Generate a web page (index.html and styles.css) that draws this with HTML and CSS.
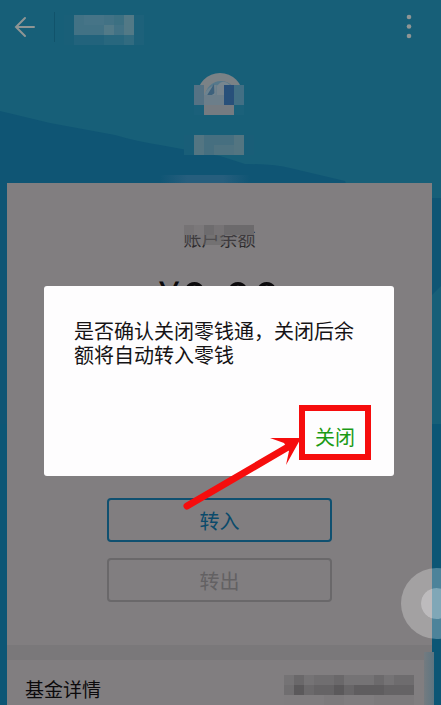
FILE: index.html
```html
<!DOCTYPE html>
<html lang="zh-CN">
<head>
    <meta charset="UTF-8">
    <meta name="viewport" content="width=device-width, initial-scale=1.0">
    <title>零钱通</title>
    <link rel="stylesheet" href="styles.css">
</head>
<body>
    <div class="page">
        <svg class="wave" viewBox="0 0 441 424" preserveAspectRatio="none" aria-hidden="true">
            <path d="M0 111 L50 123 L115 135 Q135 141 160 145 L220 156 L245 164 Q275 164 290 168 L345 181 L432 424 H0 Z"/>
            <path d="M425 198 H441 V286 L425 302 Z"/>
        </svg>

        <header class="topbar">
            <button class="icon-btn" aria-label="返回">
                <svg width="22" height="22" viewBox="0 0 22 22">
                    <path d="M11 2 L2 11 L11 20 M2 11 H20" fill="none" stroke="#8f9594" stroke-width="2" stroke-linecap="round"/>
                </svg>
            </button>
            <span class="divider"></span>
            <svg class="mosaic" width="80" height="30" viewBox="0 0 80 30">
                <rect width="80" height="30" fill="#195f78"/>
                <rect x="10" width="60" height="20" fill="#427285"/>
                <rect x="20" width="20" height="10" fill="#467487"/>
                <rect x="50" width="10" height="10" fill="#3c7082"/>
                <rect x="40" y="10" width="10" height="10" fill="#527a88"/>
                <rect x="60" width="10" height="20" fill="#527986"/>
                <rect x="10" y="20" width="60" height="10" fill="#22637c"/>
                <rect x="40" y="20" width="20" height="10" fill="#28677e"/>
                <rect x="60" y="20" width="10" height="10" fill="#316b80"/>
                <rect x="70" y="0" width="10" height="30" fill="#1d617a"/>
            </svg>
            <button class="icon-btn more" aria-label="更多">
                <svg width="6" height="26" viewBox="0 0 6 26">
                    <circle cx="3" cy="3" r="2.3" fill="#8f9594"/>
                    <circle cx="3" cy="12.5" r="2.3" fill="#8f9594"/>
                    <circle cx="3" cy="22" r="2.3" fill="#8f9594"/>
                </svg>
            </button>
        </header>

        <section class="profile">
            <svg width="120" height="110" viewBox="0 0 120 110">
                <defs>
                    <linearGradient id="fade">
                        <stop offset="0" stop-color="#265e7d" stop-opacity="0"/>
                        <stop offset="0.3" stop-color="#265e7d"/>
                        <stop offset="0.7" stop-color="#265e7d"/>
                        <stop offset="1" stop-color="#265e7d" stop-opacity="0"/>
                    </linearGradient>
                </defs>
                <circle cx="60" cy="23" r="23" fill="#7b8286"/>
                <circle cx="61" cy="24" r="16" fill="#56788b"/>
                <path d="M42 28 Q46 13 56 12 L55 29 Z" fill="#6d8390"/>
                <path d="M46 24 L54 11 L55 20 L50 23 Z" fill="#3d617c"/>
                <path d="M57 13 Q63 5 70 12 L64 14 V22 H57 Z" fill="#77868f"/>
                <g class="mosaic">
                    <rect x="34" y="12" width="10" height="20" fill="#557284"/>
                    <rect x="44" y="22" width="20" height="10" fill="#6c7e8a"/>
                    <rect x="54" y="12" width="10" height="10" fill="#78848c" opacity="0.6"/>
                    <rect x="64" y="12" width="10" height="20" fill="#28507a"/>
                    <rect x="74" y="12" width="10" height="20" fill="#426f84"/>
                    <rect x="34" y="32" width="10" height="10" fill="#1a607a"/>
                    <rect x="44" y="32" width="30" height="10" fill="#757b81"/>
                    <rect x="74" y="32" width="10" height="10" fill="#1b617a"/>
                    <rect x="44" y="42" width="30" height="5" fill="#175f78"/>
                    <rect x="24" y="62" width="70" height="20" fill="#195e78"/>
                    <rect x="34" y="62" width="50" height="20" fill="#466f80"/>
                    <rect x="34" y="62" width="10" height="20" fill="#537582"/>
                    <rect x="54" y="72" width="20" height="10" fill="#4f7381"/>
                    <rect x="74" y="62" width="10" height="20" fill="#537581"/>
                </g>
                <rect y="102" width="90" height="8" fill="url(#fade)"/>
            </svg>
        </section>

        <main class="card">
            <div class="balance">
                <p class="balance-label">账户余额
                    <svg class="label-mosaic mosaic" width="70" height="20" viewBox="0 0 70 20">
                        <rect width="70" height="10" fill="#767375"/>
                        <rect x="10" width="10" height="10" fill="#7b787a"/>
                        <rect x="20" width="10" height="10" fill="#6e6c6e"/>
                        <rect x="40" width="30" height="10" fill="#6c6a6c"/>
                        <rect y="10" width="70" height="10" fill="#6a686a" opacity="0.3"/>
                        <rect x="20" y="10" width="20" height="10" fill="#6a686a" opacity="0.4"/>
                    </svg>
                </p>
                <p class="amount"><span class="currency">¥</span>0.00</p>
            </div>
            <div class="actions">
                <button class="btn btn-in">转入</button>
                <button class="btn btn-out" disabled>转出</button>
            </div>
            <div class="fund">
                <span>基金详情</span>
                <svg class="mosaic" width="130" height="30" viewBox="0 0 130 30">
                    <rect width="130" height="10" fill="#757375"/>
                    <rect x="10" width="10" height="10" fill="#6a686a"/>
                    <rect x="30" width="20" height="10" fill="#706e70"/>
                    <rect x="50" width="10" height="10" fill="#6a686a"/>
                    <rect x="90" width="10" height="10" fill="#6c6a6c"/>
                    <rect x="110" width="20" height="10" fill="#6e6c6e"/>
                    <rect y="10" width="130" height="10" fill="#656365"/>
                    <rect y="10" width="10" height="10" fill="#706e70"/>
                    <rect x="10" y="10" width="10" height="10" fill="#5b595b"/>
                    <rect x="20" y="10" width="10" height="10" fill="#6b696b"/>
                    <rect x="50" y="10" width="10" height="10" fill="#5b595b"/>
                    <rect x="60" y="10" width="10" height="10" fill="#686668"/>
                    <rect x="70" y="10" width="30" height="10" fill="#5f5d5f"/>
                    <rect y="20" width="130" height="10" fill="#807d7f"/>
                    <rect x="40" y="20" width="20" height="10" fill="#7d7a7c"/>
                    <rect x="90" y="20" width="40" height="10" fill="#7d7a7c"/>
                </svg>
            </div>
        </main>

        <button class="float-ball" aria-label="悬浮球"></button>

        <div class="overlay">
            <div class="dialog" role="dialog" aria-label="关闭零钱通">
                <p class="dialog-text">是否确认关闭零钱通，关闭后余额将自动转入零钱</p>
                <div class="dialog-footer">
                    <button class="close-btn">关闭</button>
                </div>
                <svg class="arrow" width="124" height="80" viewBox="0 0 124 80" aria-hidden="true">
                    <path d="M6 75 L107 16" stroke="#f60d0d" stroke-width="7" stroke-linecap="round"/>
                    <path d="M89 7 L120 7 L105 34 L108 20 L103 12 Z" fill="#f60d0d"/>
                </svg>
            </div>
        </div>
    </div>
</body>
</html>
```

FILE: styles.css
```css
* {
    box-sizing: border-box;
}
body {
    margin: 0;
    font-family: "Noto Sans CJK SC", sans-serif;
    background: #0c5675;
}
p {
    margin: 0;
}
button {
    padding: 0;
    font-family: inherit;
    background: none;
    border: none;
    cursor: pointer;
}
svg {
    display: block;
}
.page {
    position: relative;
    min-height: 100vh;
    overflow: hidden;
    background: linear-gradient(#175f78 424px, #0c5675 424px);
}
.wave {
    position: absolute;
    top: 0;
    left: 0;
    width: 100%;
    height: 424px;
    fill: #0f5574;
}
.mosaic {
    shape-rendering: crispEdges;
}

/* top bar */
.topbar {
    position: relative;
    display: flex;
    align-items: center;
    height: 54px;
    padding: 0 29px 0 14px;
}
.icon-btn {
    display: flex;
}
.divider {
    width: 1px;
    height: 30px;
    margin: 0 9px 0 18px;
    background: #11536b;
}
.topbar .mosaic {
    margin-top: 6px;
}
.more {
    margin-left: auto;
}

.profile {
    position: relative;
    display: flex;
    justify-content: center;
    padding: 19px 1px 0 0;
}

/* card */
.card {
    position: relative;
    margin: 0 9px 0 7px;
    background: #817e80;
}
.balance {
    height: 315px;
    padding-top: 42px;
    text-align: center;
}
.balance-label {
    position: relative;
    width: 72px;
    margin: 0 auto;
    font-size: 18px;
    line-height: 26px;
    color: #2b292b;
}
.label-mosaic {
    position: absolute;
    top: 0;
    left: 0;
}
.amount {
    display: flex;
    justify-content: center;
    margin-top: 18px;
    font-size: 52px;
    line-height: 60px;
    color: #0c0a0c;
}
.currency {
    font-size: 40px;
    line-height: 48px;
}
.actions {
    display: flex;
    flex-direction: column;
    align-items: center;
    gap: 16px;
    padding-bottom: 43px;
}
.btn {
    width: 53%;
    height: 44px;
    font-size: 20px;
    border: 2px solid;
    border-radius: 4px;
}
.btn-in {
    color: #0b4a6b;
    border-color: #0f5070;
}
.btn-out {
    color: #636163;
    border-color: #6a686a;
}
.fund {
    position: relative;
    display: flex;
    align-items: flex-end;
    justify-content: space-between;
    height: 60px;
    padding: 0 18px;
    font-size: 19px;
    line-height: 32px;
    color: #0c0a0c;
    border-top: 15px solid #7a787a;
}
.fund::after {
    content: "";
    position: absolute;
    top: -8px;
    right: -2px;
    bottom: 0;
    width: 10px;
    background: linear-gradient(90deg, #747b80, #5d7581);
}

.float-ball {
    position: absolute;
    top: 568px;
    right: -31px;
    width: 71px;
    height: 71px;
    border: 20px solid rgba(255, 255, 255, 0.27);
    border-radius: 50%;
    background: rgba(255, 255, 255, 0.48);
    background-clip: padding-box;
}

/* confirm dialog */
.overlay {
    position: absolute;
    top: 286px;
    left: 0;
    right: 0;
    padding: 0 47px 0 44px;
}
.dialog {
    position: relative;
    padding: 33px 23px 16px 30px;
    background: #fefdfe;
    border-radius: 3px;
}
.dialog-text {
    padding-right: 14px;
    font-size: 20px;
    line-height: 24px;
    color: #151315;
}
.dialog-footer {
    display: flex;
    justify-content: flex-end;
    margin-top: 38px;
}
.close-btn {
    width: 72px;
    height: 55px;
    padding-top: 8px;
    font-size: 20px;
    line-height: 24px;
    color: #1b9a15;
    border: 6px solid #f60d0d;
}
.arrow {
    position: absolute;
    right: 89px;
    bottom: -35px;
}
```
